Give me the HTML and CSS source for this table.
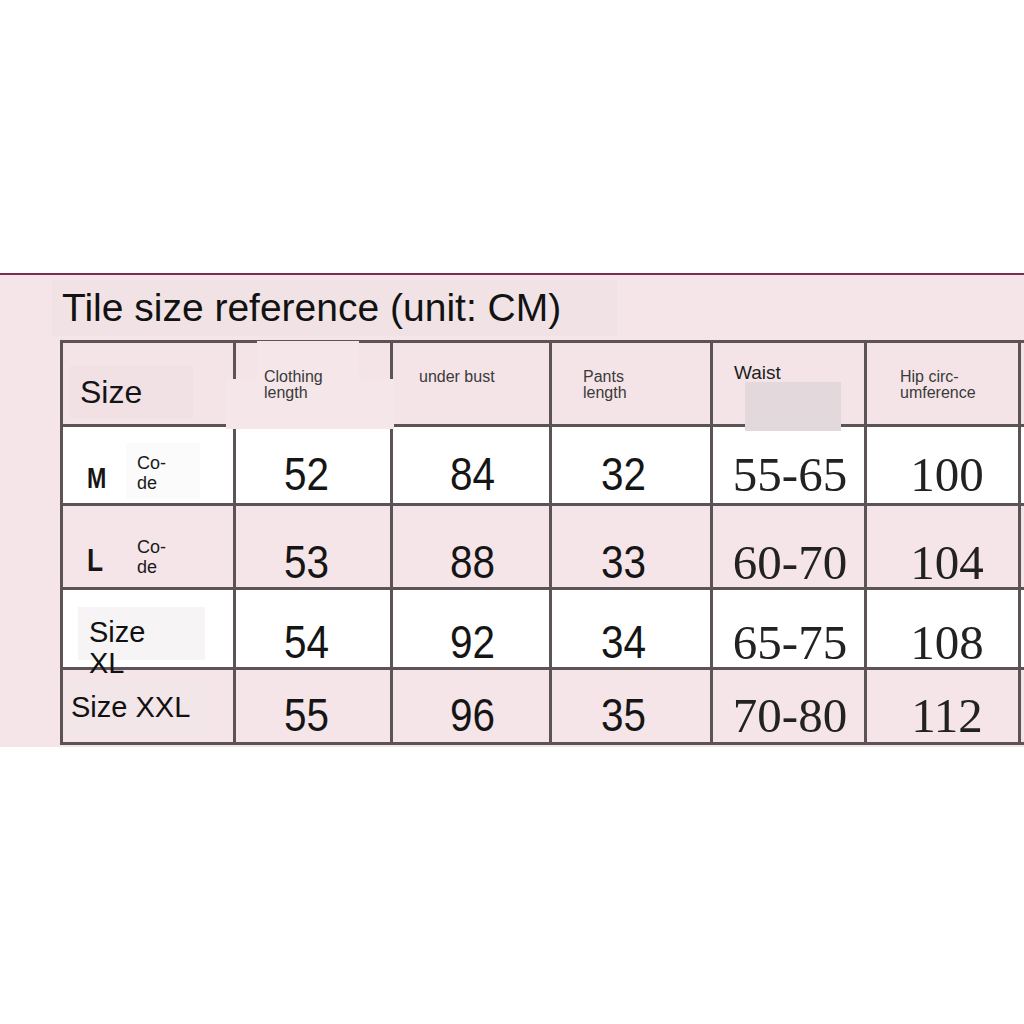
FILE: index.html
```html
<!DOCTYPE html>
<html lang="en">
<head>
<meta charset="utf-8">
<title>Tile size reference</title>
<link rel="stylesheet" href="styles.css">
</head>
<body>
<div class="band">
  <div class="title">Tile size reference (unit: CM)</div>
  <div class="grid">
    <div class="row hdr">
      <div class="cell"><span class="size-box">Size</span></div>
      <div class="cell h-cl"><span class="htxt">Clothing<br>length</span></div>
      <div class="cell h-ub"><span class="htxt">under bust</span></div>
      <div class="cell h-pl"><span class="htxt">Pants<br>length</span></div>
      <div class="cell h-wa"><span class="htxt waist">Waist</span></div>
      <div class="cell h-hc"><span class="htxt">Hip circ-<br>umference</span></div>
      <div class="cell"></div>
    </div>
    <div class="row white r-m">
      <div class="cell lab"><span class="sz sz-m">M</span><span class="code code-m">Co-<br>de</span></div>
      <div class="cell v c2"><span class="num">52</span></div>
      <div class="cell v c3"><span class="num">84</span></div>
      <div class="cell v c4"><span class="num">32</span></div>
      <div class="cell v c5"><span class="snum">55-65</span></div>
      <div class="cell v c6"><span class="snum">100</span></div>
      <div class="cell"></div>
    </div>
    <div class="row pink r-l">
      <div class="cell lab"><span class="sz sz-l">L</span><span class="code code-l">Co-<br>de</span></div>
      <div class="cell v c2"><span class="num">53</span></div>
      <div class="cell v c3"><span class="num">88</span></div>
      <div class="cell v c4"><span class="num">33</span></div>
      <div class="cell v c5"><span class="snum">60-70</span></div>
      <div class="cell v c6"><span class="snum">104</span></div>
      <div class="cell"></div>
    </div>
    <div class="row white r-xl">
      <div class="cell lab"><span class="xl-box">Size<br>XL</span></div>
      <div class="cell v c2"><span class="num">54</span></div>
      <div class="cell v c3"><span class="num">92</span></div>
      <div class="cell v c4"><span class="num">34</span></div>
      <div class="cell v c5"><span class="snum">65-75</span></div>
      <div class="cell v c6"><span class="snum">108</span></div>
      <div class="cell"></div>
    </div>
    <div class="row pink r-xxl">
      <div class="cell lab"><span class="xxl-box">Size XXL</span></div>
      <div class="cell v c2"><span class="num">55</span></div>
      <div class="cell v c3"><span class="num">96</span></div>
      <div class="cell v c4"><span class="num">35</span></div>
      <div class="cell v c5"><span class="snum">70-80</span></div>
      <div class="cell v c6"><span class="snum">112</span></div>
      <div class="cell"></div>
    </div>
  </div>
  <div class="patch patch-a"></div>
  <div class="patch patch-b"></div>
  <div class="patch patch-waist"></div>
</div>
</body>
</html>
```
FILE: styles.css
```css
html, body {
  margin: 0;
  padding: 0;
  background: #ffffff;
  overflow: hidden;
  width: 1024px;
  height: 1024px;
}

body {
  font-family: "Liberation Sans", Arial, sans-serif;
  color: #111;
}

.band {
  position: relative;
  margin-top: 273px;
  border-top: 2px solid #7b2f50;
  background: #f5e5e9;
  padding: 5px 0 2px 0;
  overflow: hidden;
}

.title {
  margin-left: 52px;
  width: 555px;
  height: 56px;
  padding-left: 10px;
  background: #f0e2e5;
  font-size: 39px;
  line-height: 56px;
  color: #121212;
  white-space: nowrap;
  margin-bottom: 4px;
}

.grid {
  margin-left: 60px;
  display: grid;
  grid-template-columns: 170px 154px 156px 158px 151px 151px 30px;
  grid-template-rows: 81px 76px 81px 77px 72px;
  gap: 3px;
  padding: 3px 0 3px 3px;
  background: #5b5355;
  width: 991px;
  box-sizing: border-box;
}

.row {
  display: contents;
}

.cell {
  background: #f4e4e8;
  min-width: 0;
}

.row.white > .cell {
  background: #ffffff;
}

.row.pink > .cell {
  background: #f5e5e9;
}

/* header */
.size-box {
  display: block;
  margin: 23px 0 0 7px;
  width: 113px;
  height: 52px;
  padding-left: 10px;
  background: #f1e0e4;
  font-size: 32px;
  line-height: 52px;
  color: #141414;
}

.htxt {
  position: relative;
  z-index: 2;
  display: block;
  font-size: 16px;
  line-height: 16px;
  color: #3a3a3a;
  padding-top: 26px;
}

.h-cl .htxt { padding-left: 28px; }
.h-ub .htxt { padding-left: 26px; }
.h-pl .htxt { padding-left: 31px; }
.h-hc .htxt { padding-left: 33px; }

.htxt.waist {
  padding-left: 21px;
  padding-top: 20px;
  font-size: 19px;
  line-height: 19px;
  color: #1e1e1e;
}

/* label cells */
.lab {
  display: flex;
  align-items: flex-start;
}

.sz {
  display: inline-block;
  width: 28px;
  margin-left: 24px;
  margin-right: 11px;
  font-weight: bold;
  transform-origin: left center;
  color: #161616;
}

.sz-m {
  font-size: 29px;
  line-height: 28px;
  margin-top: 37px;
  transform: scaleX(0.8);
}

.sz-l {
  font-size: 31px;
  line-height: 30px;
  margin-top: 40px;
  transform: scaleX(0.85);
}

.code {
  display: block;
  width: 63px;
  height: 46px;
  padding: 10px 0 0 11px;
  font-size: 18px;
  line-height: 20px;
  color: #1a1a1a;
}

.code-m {
  margin-top: 16px;
  background: #fbfbfb;
}

.code-l {
  margin-top: 21px;
}

.xl-box {
  position: relative;
  z-index: 2;
  display: block;
  margin: 17px 0 0 15px;
  width: 116px;
  height: 43px;
  padding: 10px 0 0 11px;
  background: #f7f4f5;
  font-size: 29px;
  line-height: 31px;
  color: #111;
}

.xxl-box {
  display: block;
  margin-top: 10px;
  width: 136px;
  height: 42px;
  padding: 13px 0 0 8px;
  background: #f3e6e9;
  font-size: 29px;
  line-height: 29px;
  color: #111;
  white-space: nowrap;
}

/* value cells */
.v {
  display: flex;
  align-items: center;
  justify-content: center;
  box-sizing: border-box;
}

.r-m .v { padding-top: 18px; }
.r-l .v { padding-top: 31px; }
.r-xl .v { padding-top: 27px; }
.r-xxl .v { padding-top: 18px; }

.c2 { padding-right: 12px; }
.c3 { padding-left: 4px; }
.c4 { padding-right: 14px; }
.c5 { padding-left: 3px; }
.c6 { padding-left: 9px; }

.num {
  display: inline-block;
  font-family: "Liberation Sans", Arial, sans-serif;
  font-size: 46px;
  line-height: 1;
  transform: scaleX(0.88);
  color: #151515;
}

.snum {
  display: inline-block;
  font-family: "Liberation Serif", "Times New Roman", serif;
  font-size: 49px;
  line-height: 1;
  color: #222;
}

/* overlay patches from the original image */
.patch {
  position: absolute;
  z-index: 1;
}

.patch-a {
  top: 104px;
  left: 226px;
  width: 168px;
  height: 50px;
  background: #f4e6e9;
}

.patch-b {
  top: 66px;
  left: 257px;
  width: 102px;
  height: 38px;
  background: #f4e6e9;
}

.patch-waist {
  top: 107px;
  left: 745px;
  width: 96px;
  height: 49px;
  background: #e3d8db;
}
```
